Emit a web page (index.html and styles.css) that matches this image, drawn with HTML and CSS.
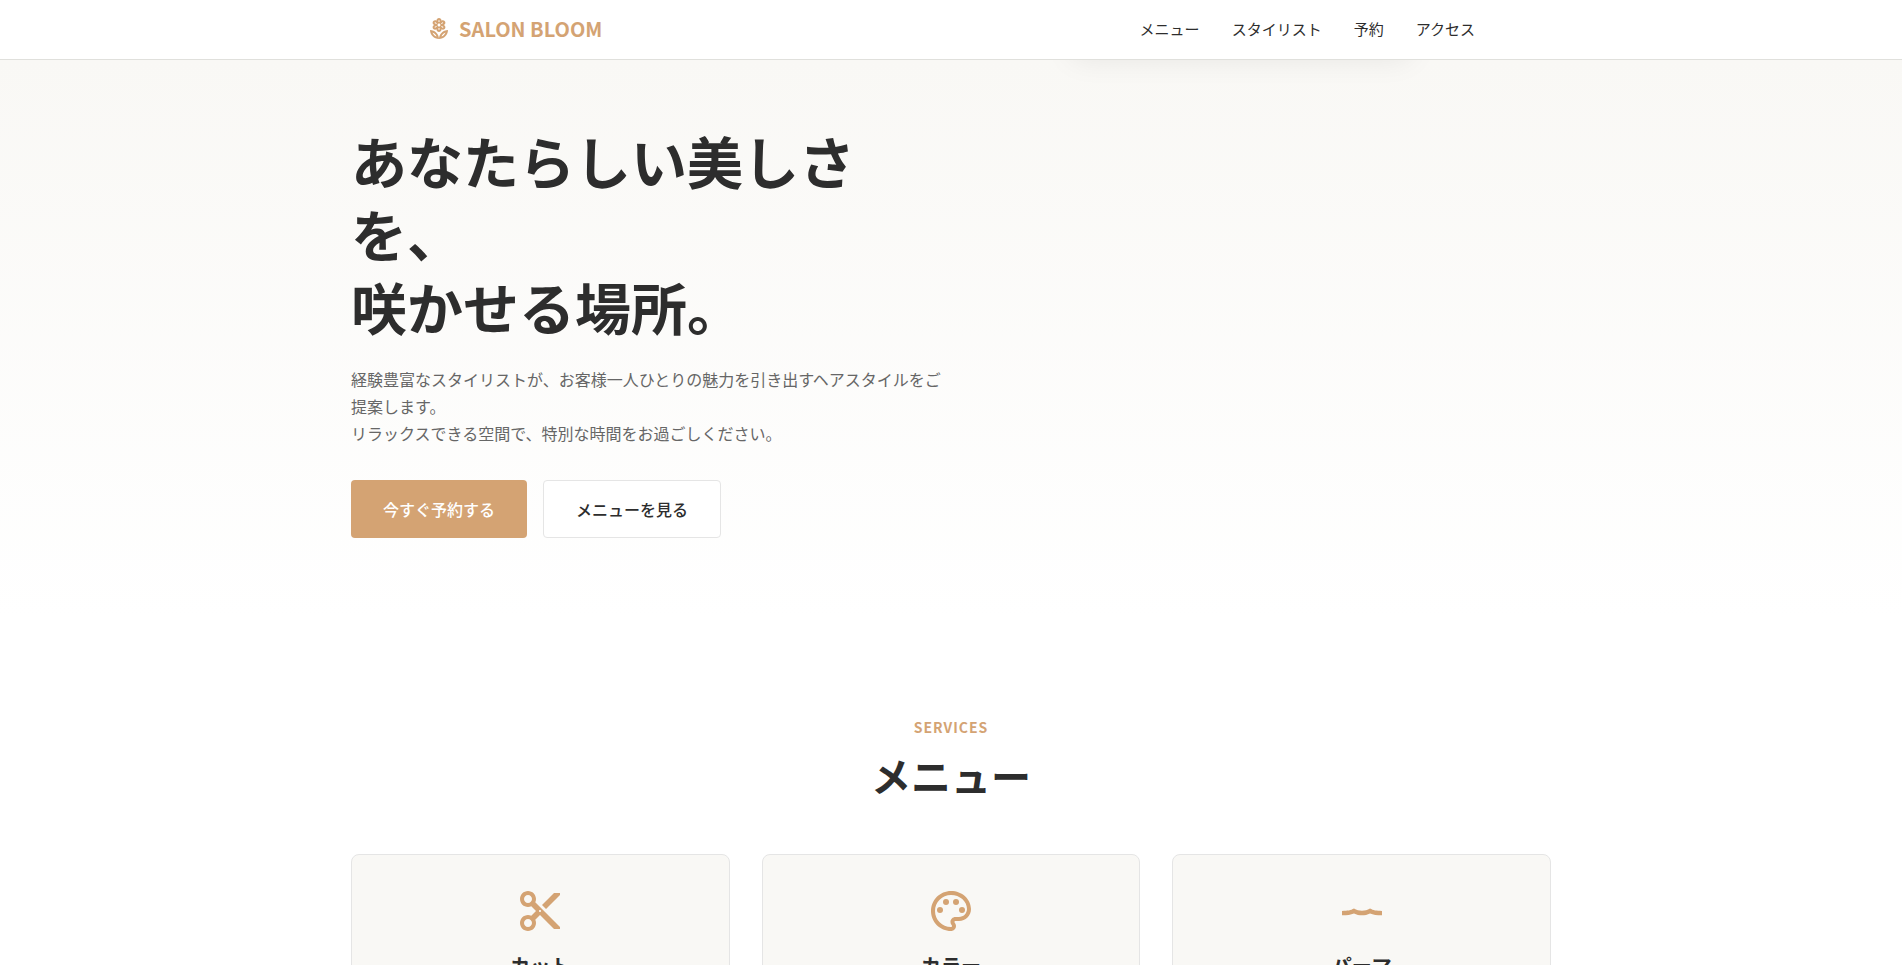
FILE: index.html
```html
<!DOCTYPE html>
<html lang="ja">
<head>
<meta charset="utf-8">
<meta name="viewport" content="width=device-width, initial-scale=1">
<title>SALON BLOOM</title>
<link rel="stylesheet" href="styles.css">
</head>
<body>
<header class="header">
  <div class="header-inner">
    <a class="logo" href="#top">
      <svg class="logo-icon" viewBox="0 0 24 24" aria-hidden="true"><path d="M12 22c4.97 0 9-4.03 9-9-4.97 0-9 4.03-9 9zm2.44-2.44c.71-1.9 2.22-3.42 4.12-4.12-.71 1.9-2.22 3.41-4.12 4.12zM3 13c0 4.97 4.03 9 9 9 0-4.97-4.03-9-9-9zm2.44 2.44c1.9.71 3.42 2.22 4.12 4.12-1.9-.71-3.41-2.22-4.12-4.12zM5.6 10.25c0 1.38 1.12 2.5 2.5 2.5.53 0 1.01-.16 1.42-.44l-.02.19c0 1.38 1.12 2.5 2.5 2.5s2.5-1.12 2.5-2.5l-.02-.19c.4.28.89.44 1.42.44 1.38 0 2.5-1.12 2.5-2.5 0-1-.59-1.85-1.43-2.25.84-.4 1.43-1.25 1.43-2.25 0-1.38-1.12-2.5-2.5-2.5-.53 0-1.01.16-1.42.44l.02-.19C14.5 2.12 13.38 1 12 1S9.500 2.120 9.500 3.500l.02.19c-.4-.28-.89-.44-1.42-.44-1.38 0-2.500 1.120-2.500 2.500 0 1 .59 1.850 1.430 2.250-.84.4-1.430 1.250-1.430 2.250zM12 13c-.28 0-.500-.220-.500-.500v-1.620c.16.020.33.030.500.030s.34-.010.500-.030v1.620c0 .28-.220.500-.500.500zm3.900-2.250c-.1 0-.2-.03-.28-.09l-1.400-.97c.14-.18.27-.370.37-.570l1.040.500.500.250c.17.080.28.250.28.440-.010.240-.230.440-.510.440zm.230-4.950c0 .19-.11.360-.28.440l-1.530.74c-.09-.21-.210-.400-.350-.580l1.370-.95c.080-.060.180-.09.280-.09.28.000.510.190.510.440zM12 3c.28 0 .5.220.5.500v1.620c-.16-.020-.33-.030-.500-.030s-.34.010-.500.030v-1.620c0-.28.220-.500.500-.500zm0 3.500c.83 0 1.500.67 1.500 1.500s-.67 1.500-1.500 1.500-1.500-.67-1.500-1.500.67-1.500 1.500-1.500zM8.100 5.250c.1 0 .2.030.28.090l1.400.97c-.14.18-.27.370-.37.570l-1.540-.75c-.17-.080-.27-.250-.27-.440 0-.250.220-.440.500-.440zm-.230 4.560l1.540-.74c.1.200.22.390.37.560l-1.390.96c-.090.060-.190.090-.290.090-.28 0-.500-.190-.500-.440 0-.18.1-.350.270-.430z"/></svg>
      <span>SALON BLOOM</span>
    </a>
    <nav class="nav">
      <a href="#services">メニュー</a>
      <a href="#stylists">スタイリスト</a>
      <a href="#booking">予約</a>
      <a href="#access">アクセス</a>
    </nav>
  </div>
</header>
<main>
  <section class="hero" id="top">
    <div class="container">
      <div class="hero-content">
        <h1 class="hero-title">あなたらしい美しさを、<br>咲かせる場所。</h1>
        <p class="hero-text">経験豊富なスタイリストが、お客様一人ひとりの魅力を引き出すヘアスタイルをご提案します。<br>リラックスできる空間で、特別な時間をお過ごしください。</p>
        <div class="hero-actions">
          <a class="button button-primary" href="#booking">今すぐ予約する</a>
          <a class="button button-outline" href="#services">メニューを見る</a>
        </div>
      </div>
      <div class="hero-card" aria-hidden="true"></div>
    </div>
  </section>
  <section class="services" id="services">
    <div class="container">
      <p class="section-label">SERVICES</p>
      <h2 class="section-title">メニュー</h2>
      <div class="cards">
        <article class="card">
          <svg class="card-icon" viewBox="0 0 24 24" aria-hidden="true"><path d="M9.640 7.640c.230-.500.360-1.050.360-1.640 0-2.210-1.790-4-4-4S2 3.790 2 6s1.790 4 4 4c.590 0 1.140-.130 1.640-.360L10 12l-2.360 2.360C7.140 14.130 6.590 14 6 14c-2.210 0-4 1.790-4 4s1.790 4 4 4 4-1.790 4-4c0-.590-.130-1.140-.360-1.640L12 14l7 7h3v-1L9.640 7.640zM6 8c-1.100 0-2-.890-2-2s.900-2 2-2 2 .890 2 2-.900 2-2 2zm0 12c-1.100 0-2-.890-2-2s.900-2 2-2 2 .890 2 2-.900 2-2 2zm6-7.500c-.280 0-.500-.220-.500-.500s.220-.500.500-.500.500.220.500.500-.220.500-.500.500zM19 3l-6 6 2 2 7-7V3z"/></svg>
          <h3 class="card-title">カット</h3>
        </article>
        <article class="card">
          <svg class="card-icon" viewBox="0 0 24 24" aria-hidden="true"><path d="M12 22C6.490 22 2 17.510 2 12S6.490 2 12 2s10 4.040 10 9c0 3.310-2.690 6-6 6h-1.770c-.280 0-.500.220-.500.500 0 .120.050.230.130.330.410.470.640 1.060.640 1.670 0 1.380-1.120 2.500-2.500 2.500zm0-18c-4.410 0-8 3.590-8 8s3.590 8 8 8c.280 0 .500-.220.500-.500 0-.160-.080-.280-.140-.350-.410-.460-.630-1.050-.630-1.650 0-1.380 1.120-2.500 2.500-2.500H16c2.210 0 4-1.790 4-4 0-3.860-3.590-7-8-7z"/><circle cx="6.500" cy="11.500" r="1.500"/><circle cx="9.500" cy="7.500" r="1.500"/><circle cx="14.500" cy="7.500" r="1.500"/><circle cx="17.500" cy="11.500" r="1.500"/></svg>
          <h3 class="card-title">カラー</h3>
        </article>
        <article class="card">
          <svg class="card-icon" viewBox="0 0 24 24" aria-hidden="true"><path d="M2 12c2.900 0 4.300-.300 6-1.200 2.600 1.500 5.400 1.500 8 0 1.700.9 3.100 1.200 6 1.200v2.100c-2.600 0-4.400-.200-6-.9-2.600 1.300-5.400 1.300-8 0-1.600.7-3.400.9-6 .9z"/></svg>
          <h3 class="card-title">パーマ</h3>
        </article>
      </div>
    </div>
  </section>
</main>
</body>
</html>
```
FILE: styles.css
```css
* {
  box-sizing: border-box;
}

html {
  overflow-x: hidden;
}

body {
  margin: 0;
  background: #fff;
  color: #2d2d2d;
  font-family: "Noto Sans CJK JP", sans-serif;
  font-size: 16px;
  line-height: 27px;
}

h1, h2, h3, p {
  margin: 0;
}

a {
  color: inherit;
  text-decoration: none;
}

.container {
  position: relative;
  max-width: 1200px;
  margin: 0 auto;
}

.header {
  position: sticky;
  top: 0;
  z-index: 10;
  background: #fff;
  border-bottom: 1px solid #e0e0dc;
}

.header-inner {
  display: flex;
  align-items: center;
  justify-content: space-between;
  max-width: 1200px;
  margin: 0 auto;
  padding: 15px 4% 17px;
}

.logo {
  display: flex;
  align-items: center;
  gap: 8px;
  color: #d4a373;
  font-size: 20px;
  font-weight: 700;
}

.logo-icon {
  width: 24px;
  height: 24px;
  fill: currentColor;
}

.nav {
  display: flex;
  gap: 32px;
  font-size: 15px;
}

.hero {
  padding: 63px 0 80px;
  background: linear-gradient(180deg, #f9f8f5 0%, #fff 100%);
}

.hero-content {
  max-width: 600px;
}

.hero-title {
  max-width: 552px;
  margin-bottom: 24px;
  font-size: 56px;
  font-weight: 700;
  line-height: 73px;
}

.hero-text {
  margin-bottom: 33px;
  color: #666;
}

.hero-actions {
  display: flex;
  gap: 16px;
}

.button {
  padding: 15px 32px;
  border-radius: 4px;
  font-weight: 500;
  line-height: 28px;
}

.button-primary {
  background: #d4a373;
  color: #fff;
}

.button-outline {
  padding: 14px 32px;
  background: #fff;
  border: 1px solid #e5e5e5;
}

.hero-card {
  position: absolute;
  right: 140px;
  bottom: 100%;
  width: 340px;
  height: 40px;
  margin-bottom: 74px;
  border-radius: 8px;
  box-shadow: 0 10px 30px rgba(0, 0, 0, 0.08);
}

.services {
  padding: 96px 0;
}

.section-label {
  color: #d4a373;
  font-size: 14px;
  font-weight: 700;
  letter-spacing: 1px;
  text-align: center;
}

.section-title {
  margin-bottom: 45px;
  font-size: 40px;
  font-weight: 700;
  line-height: 68px;
  text-align: center;
}

.cards {
  display: grid;
  grid-template-columns: repeat(3, 1fr);
  gap: 32px;
}

.card {
  padding: 32px;
  background: #f9f8f5;
  border: 1px solid #e5e5e5;
  border-radius: 8px;
  text-align: center;
}

.card-icon {
  display: block;
  width: 48px;
  height: 48px;
  margin: 0 auto 16px;
  fill: #d4a373;
}

.card-title {
  font-size: 20px;
  font-weight: 700;
  line-height: 30px;
}
```
